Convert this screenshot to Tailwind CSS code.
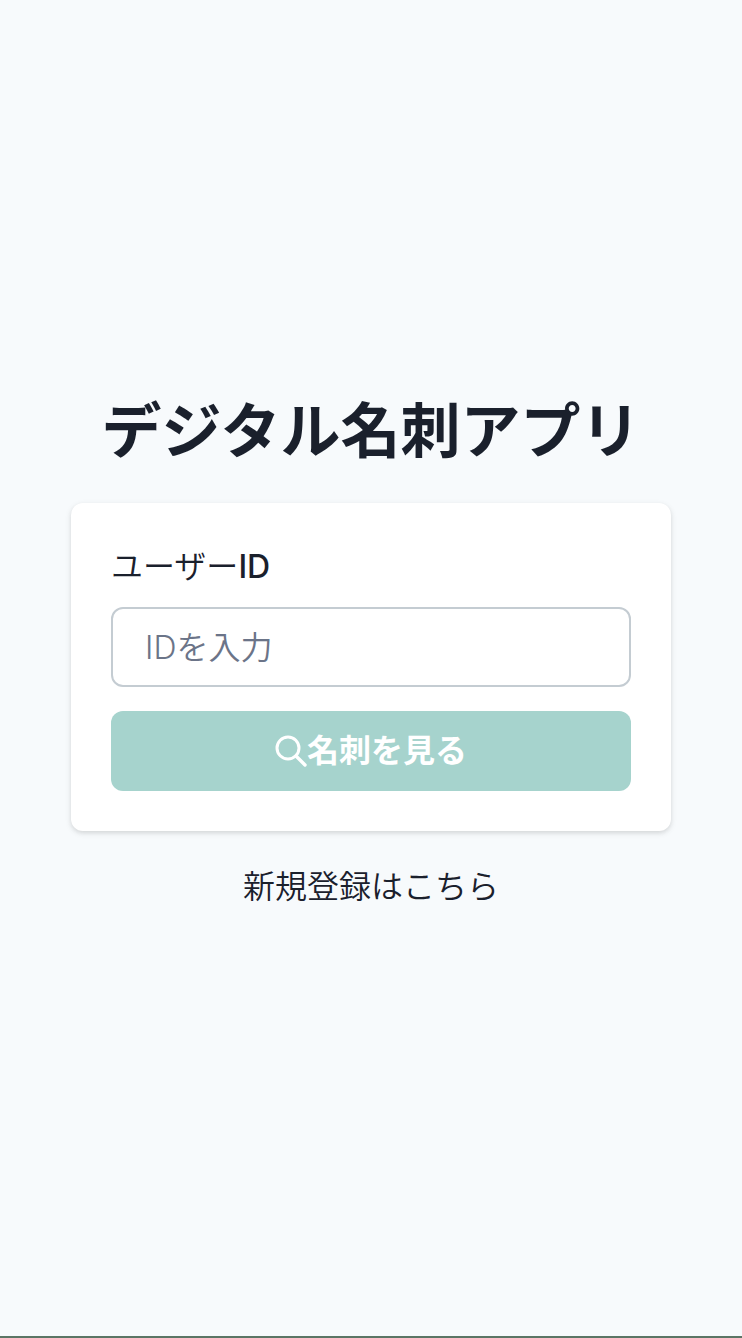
<!DOCTYPE html>
<html lang="ja">
<head>
  <meta charset="UTF-8" />
  <meta name="viewport" content="width=device-width, initial-scale=1.0" />
  <title>デジタル名刺アプリ</title>
  <script src="https://cdn.jsdelivr.net/npm/@tailwindcss/browser@4"></script>
</head>
<body class="min-h-screen flex flex-col bg-[#f7fafc] text-[#1a202c] font-['Inter','Noto_Sans_CJK_JP',sans-serif]">
  <main class="flex-1 flex flex-col items-center justify-center px-[71px] pb-[30px]">
    <h1 class="text-[60px] leading-[72px] font-bold whitespace-nowrap mb-9">デジタル名刺アプリ</h1>

    <!-- ID検索カード -->
    <form class="w-full bg-white rounded-xl p-10 shadow-[0_2px_6px_rgba(0,0,0,0.1),0_2px_4px_rgba(0,0,0,0.06)]">
      <label for="userId" class="block text-[32px] leading-12 font-medium mb-4"><span class="font-[350]">ユーザー</span>ID</label>
      <input type="text" id="userId" placeholder="IDを入力" class="block w-full h-20 px-8 mb-6 text-[32px] font-[350] rounded-xl border-2 border-[#c4ccd2] placeholder-[#6b7488]" />
      <button type="submit" class="w-full h-20 flex items-center justify-center rounded-xl bg-[#a6d3cd] text-white text-[32px] font-bold">
        <svg class="size-8" fill="none" stroke="currentColor" viewBox="0 0 32 32">
          <circle cx="13" cy="13" r="11" stroke-width="3" />
          <path d="M21 21l9 9" stroke-width="3.4" stroke-linecap="round" />
        </svg>
        名刺を見る
      </button>
    </form>

    <a href="#" class="mt-8 text-[32px] leading-12 font-[350]">新規登録はこちら</a>
  </main>
  <div class="h-[2px] bg-[#5b7565]"></div>
</body>
</html>
